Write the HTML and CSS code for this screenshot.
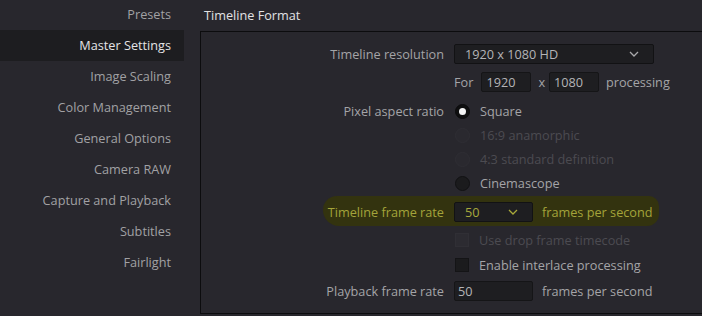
FILE: index.html
```html
<!DOCTYPE html>
<html lang="en">
<head>
  <meta charset="UTF-8" />
  <title>Project Settings</title>
  <link rel="stylesheet" href="styles.css">
</head>
<body>
  <div class="window">

    <!-- Left navigation -->
    <ul class="sidebar">
      <li>Presets</li>
      <li class="active">Master Settings</li>
      <li>Image Scaling</li>
      <li>Color Management</li>
      <li>General Options</li>
      <li>Camera RAW</li>
      <li>Capture and Playback</li>
      <li>Subtitles</li>
      <li>Fairlight</li>
    </ul>

    <!-- Settings -->
    <div class="main">
      <div class="section-title">Timeline Format</div>

      <div class="panel">
        <div class="row r-tall">
          <div class="label">Timeline resolution</div>
          <div class="ctrl">
            <div class="select wide">
              <span>1920 x 1080 HD</span>
              <svg class="chev" width="10" height="6" viewBox="0 0 10 6"><path d="M1 1l4 4 4-4" fill="none" stroke="#a9a9ab" stroke-width="1.3"/></svg>
            </div>
          </div>
        </div>

        <div class="row r-tall">
          <div class="label"></div>
          <div class="ctrl">
            <span class="txt">For</span>
            <div class="input small first">1920</div>
            <span class="txt times">x</span>
            <div class="input small">1080</div>
            <span class="txt">processing</span>
          </div>
        </div>

        <div class="row r-radio first-radio">
          <div class="label">Pixel aspect ratio</div>
          <div class="ctrl">
            <span class="radio on"></span>
            <span class="txt">Square</span>
          </div>
        </div>
        <div class="row r-radio">
          <div class="label"></div>
          <div class="ctrl disabled">
            <span class="radio off"></span>
            <span class="txt">16:9 anamorphic</span>
          </div>
        </div>
        <div class="row r-radio">
          <div class="label"></div>
          <div class="ctrl disabled">
            <span class="radio off"></span>
            <span class="txt">4:3 standard definition</span>
          </div>
        </div>
        <div class="row r-radio">
          <div class="label"></div>
          <div class="ctrl">
            <span class="radio"></span>
            <span class="txt">Cinemascope</span>
          </div>
        </div>

        <div class="row r-tall marked">
          <div class="label">Timeline frame rate</div>
          <div class="ctrl">
            <div class="select rate">
              <span>50</span>
              <svg class="chev" width="10" height="6" viewBox="0 0 10 6"><path d="M1 1l4 4 4-4" fill="none" stroke="#a9a93a" stroke-width="1.3"/></svg>
            </div>
            <span class="txt">frames per second</span>
          </div>
        </div>

        <div class="row r-check">
          <div class="label"></div>
          <div class="ctrl disabled">
            <span class="check off"></span>
            <span class="txt">Use drop frame timecode</span>
          </div>
        </div>
        <div class="row r-radio">
          <div class="label"></div>
          <div class="ctrl">
            <span class="check"></span>
            <span class="txt">Enable interlace processing</span>
          </div>
        </div>

        <div class="row r-tall">
          <div class="label">Playback frame rate</div>
          <div class="ctrl">
            <div class="input rate-input">50</div>
            <span class="txt">frames per second</span>
          </div>
        </div>
      </div>
    </div>

  </div>
</body>
</html>
```

FILE: styles.css
```css
* { margin: 0; padding: 0; box-sizing: border-box; }

body {
  background: #28272d;
  color: #a4a4a7;
  font-family: 'Open Sans', 'Noto Sans', sans-serif;
  font-size: 12.7px;
  overflow: hidden;
}

.window {
  display: flex;
  height: 316px;
}

/* sidebar */
.sidebar {
  list-style: none;
  width: 184px;
  flex-shrink: 0;
  margin-top: -1px;
}

.sidebar li {
  height: 31px;
  line-height: 31px;
  text-align: right;
  padding-right: 13px;
  color: #a1a1a4;
}

.sidebar li.active {
  background: #1d1d20;
  color: #e4e4e6;
}

/* main */
.main {
  flex: 1;
  padding-left: 16px;
  overflow: hidden;
}

.section-title {
  height: 31px;
  line-height: 31px;
  padding-left: 4px;
  color: #e2e2e4;
}

.panel {
  width: 540px;
  height: 283px;
  border: 1px solid #0c0c0e;
  border-right: none;
  padding-top: 8px;
}

.row {
  display: flex;
  align-items: center;
  position: relative;
}

.r-tall { height: 28px; }
.r-radio { height: 24px; }
.r-check { height: 27px; }
.first-radio, .marked { margin-top: 3px; }

.label {
  width: 243px;
  text-align: right;
  flex-shrink: 0;
}

.ctrl {
  display: flex;
  align-items: center;
  gap: 7px;
  margin-left: 10px;
}

.txt { white-space: nowrap; }
.times { margin-right: -3px; }

.disabled { color: #4c4b51; }

/* fields */
.select {
  height: 20px;
  background: #1e1e21;
  border: 1px solid #121214;
  border-radius: 2px;
  display: flex;
  align-items: center;
  justify-content: space-between;
  padding: 0 14px 0 10px;
  color: #b4b4b7;
}

.select.wide { width: 200px; }
.select.rate { width: 79px; margin-right: 2px; }

.chev { display: block; }

.input {
  height: 20px;
  background: #1e1e21;
  border: 1px solid #151517;
  border-radius: 2px;
  padding-left: 4px;
  line-height: 18px;
  color: #b4b4b7;
}

.input.small { width: 50px; }
.input.small.first { margin-left: 1px; }
.input.rate-input { width: 79px; padding-left: 3px; margin-right: 2px; }

/* radio / checkbox */
.radio {
  width: 15px;
  height: 15px;
  border-radius: 50%;
  background: #1b1b1d;
  border: 1px solid #111113;
  margin-left: 1px;
  margin-right: 3px;
  position: relative;
}

.radio.on {
  background: #0f0f10;
  border-color: #0b0b0c;
}

.radio.on::after {
  content: '';
  position: absolute;
  left: 3px;
  top: 3px;
  width: 7px;
  height: 7px;
  border-radius: 50%;
  background: #f4f4f4;
}

.radio.off {
  background: #2a292f;
  border-color: #2f2e34;
}

.check {
  width: 14px;
  height: 14px;
  background: #1b1b1d;
  border: 1px solid #141416;
  margin-left: 1px;
  margin-right: 3px;
}

.check.off {
  background: #2c2b31;
  border-color: #302f35;
}

/* yellow marker around the frame rate row */
.marked::before {
  content: '';
  position: absolute;
  left: 122px;
  top: -2px;
  width: 336px;
  height: 30px;
  background: #33330f;
  border-radius: 14px 10px 12px 16px;
}

.marked .label,
.marked .ctrl { position: relative; color: #a4a43a; }

.marked .select { color: #a8a83c; }
```
